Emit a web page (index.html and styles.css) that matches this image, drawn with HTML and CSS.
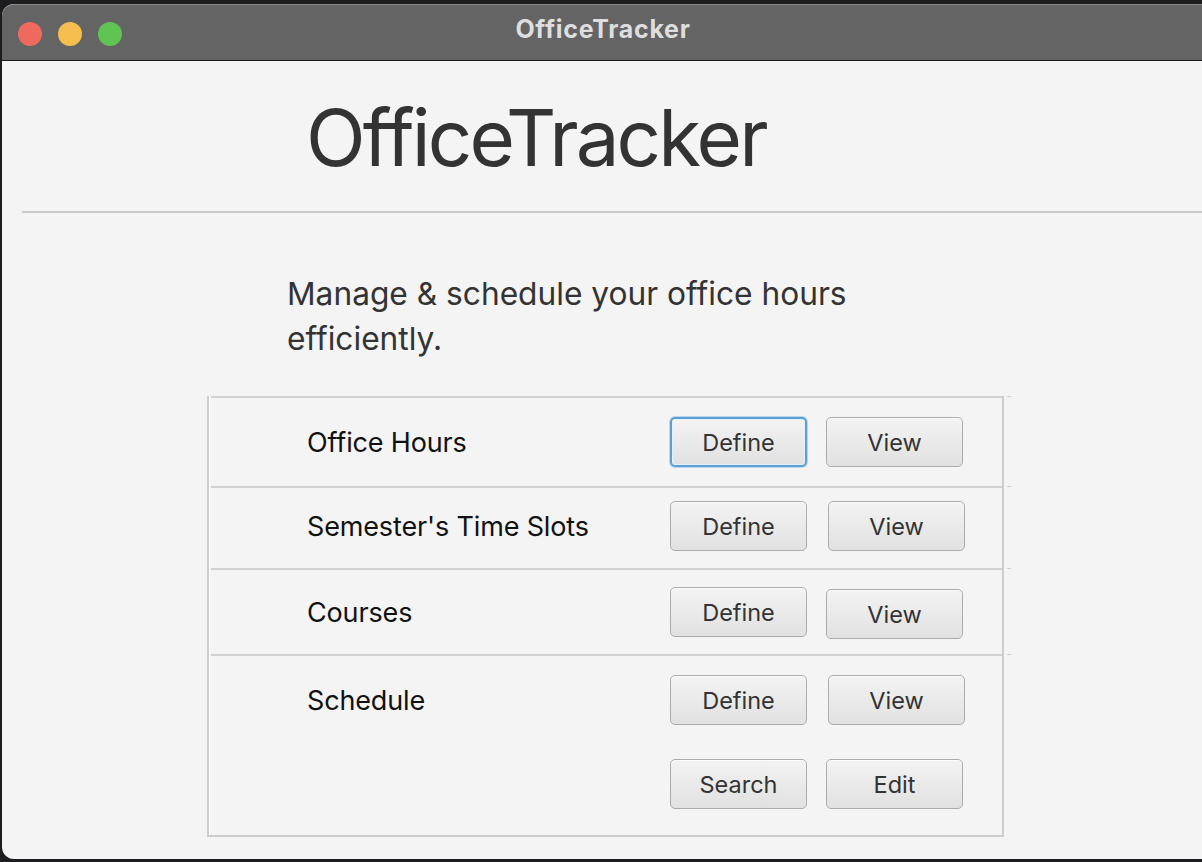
FILE: index.html
```html
<!DOCTYPE html>
<html>
<head>
<meta charset="utf-8">
<link rel="stylesheet" href="styles.css">
</head>
<body>
<div class="desktop">
  <div class="window">
    <div class="titlebar">
      <div class="lights">
        <span class="light red"></span>
        <span class="light yellow"></span>
        <span class="light green"></span>
      </div>
      <div class="wtitle">OfficeTracker</div>
      <div></div>
    </div>
    <div class="content">
      <h1 class="app-title">OfficeTracker</h1>
      <div class="divider"></div>
      <p class="subtitle">Manage &amp; schedule your office hours efficiently.</p>
      <div class="table">
        <div class="row row1">
          <div class="label">Office Hours</div>
          <button class="btn focused">Define</button>
          <button class="btn">View</button>
        </div>
        <div class="row row2">
          <div class="label">Semester's Time Slots</div>
          <button class="btn">Define</button>
          <button class="btn gap-wide">View</button>
        </div>
        <div class="row row3">
          <div class="label">Courses</div>
          <button class="btn">Define</button>
          <button class="btn lower">View</button>
        </div>
        <div class="row row4">
          <div class="label">Schedule</div>
          <button class="btn">Define</button>
          <button class="btn gap-wide">View</button>
          <div class="label"></div>
          <button class="btn">Search</button>
          <button class="btn">Edit</button>
        </div>
      </div>
    </div>
  </div>
</div>
</body>
</html>
```
FILE: styles.css
```css
html, body {
  margin: 0;
  padding: 0;
  background: #1d1d1f;
  width: 1202px;
  height: 862px;
  overflow: hidden;
}

.desktop {
  padding: 4px 0 0 2px;
  font-family: Inter, "Noto Sans", sans-serif;
}

.window {
  width: 1212px;
  height: 855px;
  border-radius: 12px;
  overflow: hidden;
  background: #f4f4f4;
  display: flex;
  flex-direction: column;
}

.titlebar {
  height: 57px;
  flex: none;
  background: #646464;
  border-top: 1px solid #8a8a8a;
  border-bottom: 1px solid #1a1a1a;
  box-sizing: border-box;
  display: grid;
  grid-template-columns: 1fr auto 1fr;
  align-items: center;
  border-radius: 12px 12px 0 0;
  padding-right: 10px;
}

.lights {
  display: flex;
  gap: 16px;
  padding-left: 16px;
  padding-top: 3px;
}

.light {
  width: 24px;
  height: 24px;
  border-radius: 50%;
  display: block;
}
.red { background: #ee6a5f; }
.yellow { background: #f5be4f; }
.green { background: #5fc454; }

.wtitle {
  color: #dedede;
  font-weight: 700;
  font-size: 25px;
  letter-spacing: 0.7px;
  margin-top: -7px;
}

.content {
  flex: 1;
  display: flex;
  flex-direction: column;
}

.app-title {
  margin: 27px 0 0 304px;
  font-weight: 400;
  font-size: 78px;
  line-height: 100px;
  color: #333333;
  letter-spacing: -2.85px;
}

.divider {
  margin: 23px 0 0 20px;
  height: 2px;
  background: #cacaca;
}

.subtitle {
  margin: 58px 0 0 285px;
  width: 600px;
  font-size: 31.7px;
  line-height: 45px;
  color: #333333;
}

.table {
  margin: 35px 0 0 205px;
  width: 793px;
  border-left: 2px solid #cdcdcd;
  border-right: 2px solid #cdcdcd;
  box-shadow: inset 1px 0 0 #ffffff;
  border-bottom: 2px solid #cdcdcd;
  box-sizing: content-box;
  height: 439px;
}

.row {
  margin-left: 2px;
  margin-right: 0;
  border-top: 2px solid #d2d2d2;
  display: grid;
  grid-template-columns: 363px 137px auto;
  align-items: start;
  align-content: start;
  padding-left: 96px;
  box-sizing: border-box;
  row-gap: 34px;
  position: relative;
}

.row::after {
  content: "";
  position: absolute;
  top: -2px;
  right: -9px;
  width: 4px;
  height: 1px;
  background: #d0d0d0;
}

.row1 { height: 90px; padding-top: 19px; }
.row2 { height: 82px; padding-top: 13px; }
.row3 { height: 86px; padding-top: 17px; }
.row4 { height: 181px; padding-top: 19px; }

.label {
  height: 50px;
  display: flex;
  align-items: center;
  font-size: 27px;
  color: #111111;
  letter-spacing: -0.15px;
  padding-top: 1px;
  box-sizing: border-box;
}

.btn {
  width: 137px;
  height: 50px;
  border: 1px solid #acacac;
  border-radius: 5px;
  background: linear-gradient(#f3f3f3, #e1e1e1);
  font-family: Inter, "Noto Sans", sans-serif;
  font-size: 23.5px;
  color: #333333;
  padding: 0;
  margin: 0;
  box-shadow: inset 0 1px 0 #fbfbfb;
}

.btn + .btn { margin-left: 19px; }
.btn.gap-wide { margin-left: 21px; }
.btn.lower { margin-top: 2px; }

.btn.focused {
  border: 2px solid #5c9fd3;
  box-shadow: 0 0 0 1px #b9d7ee, inset 0 0 0 1px #e6f0f8;
}
```
